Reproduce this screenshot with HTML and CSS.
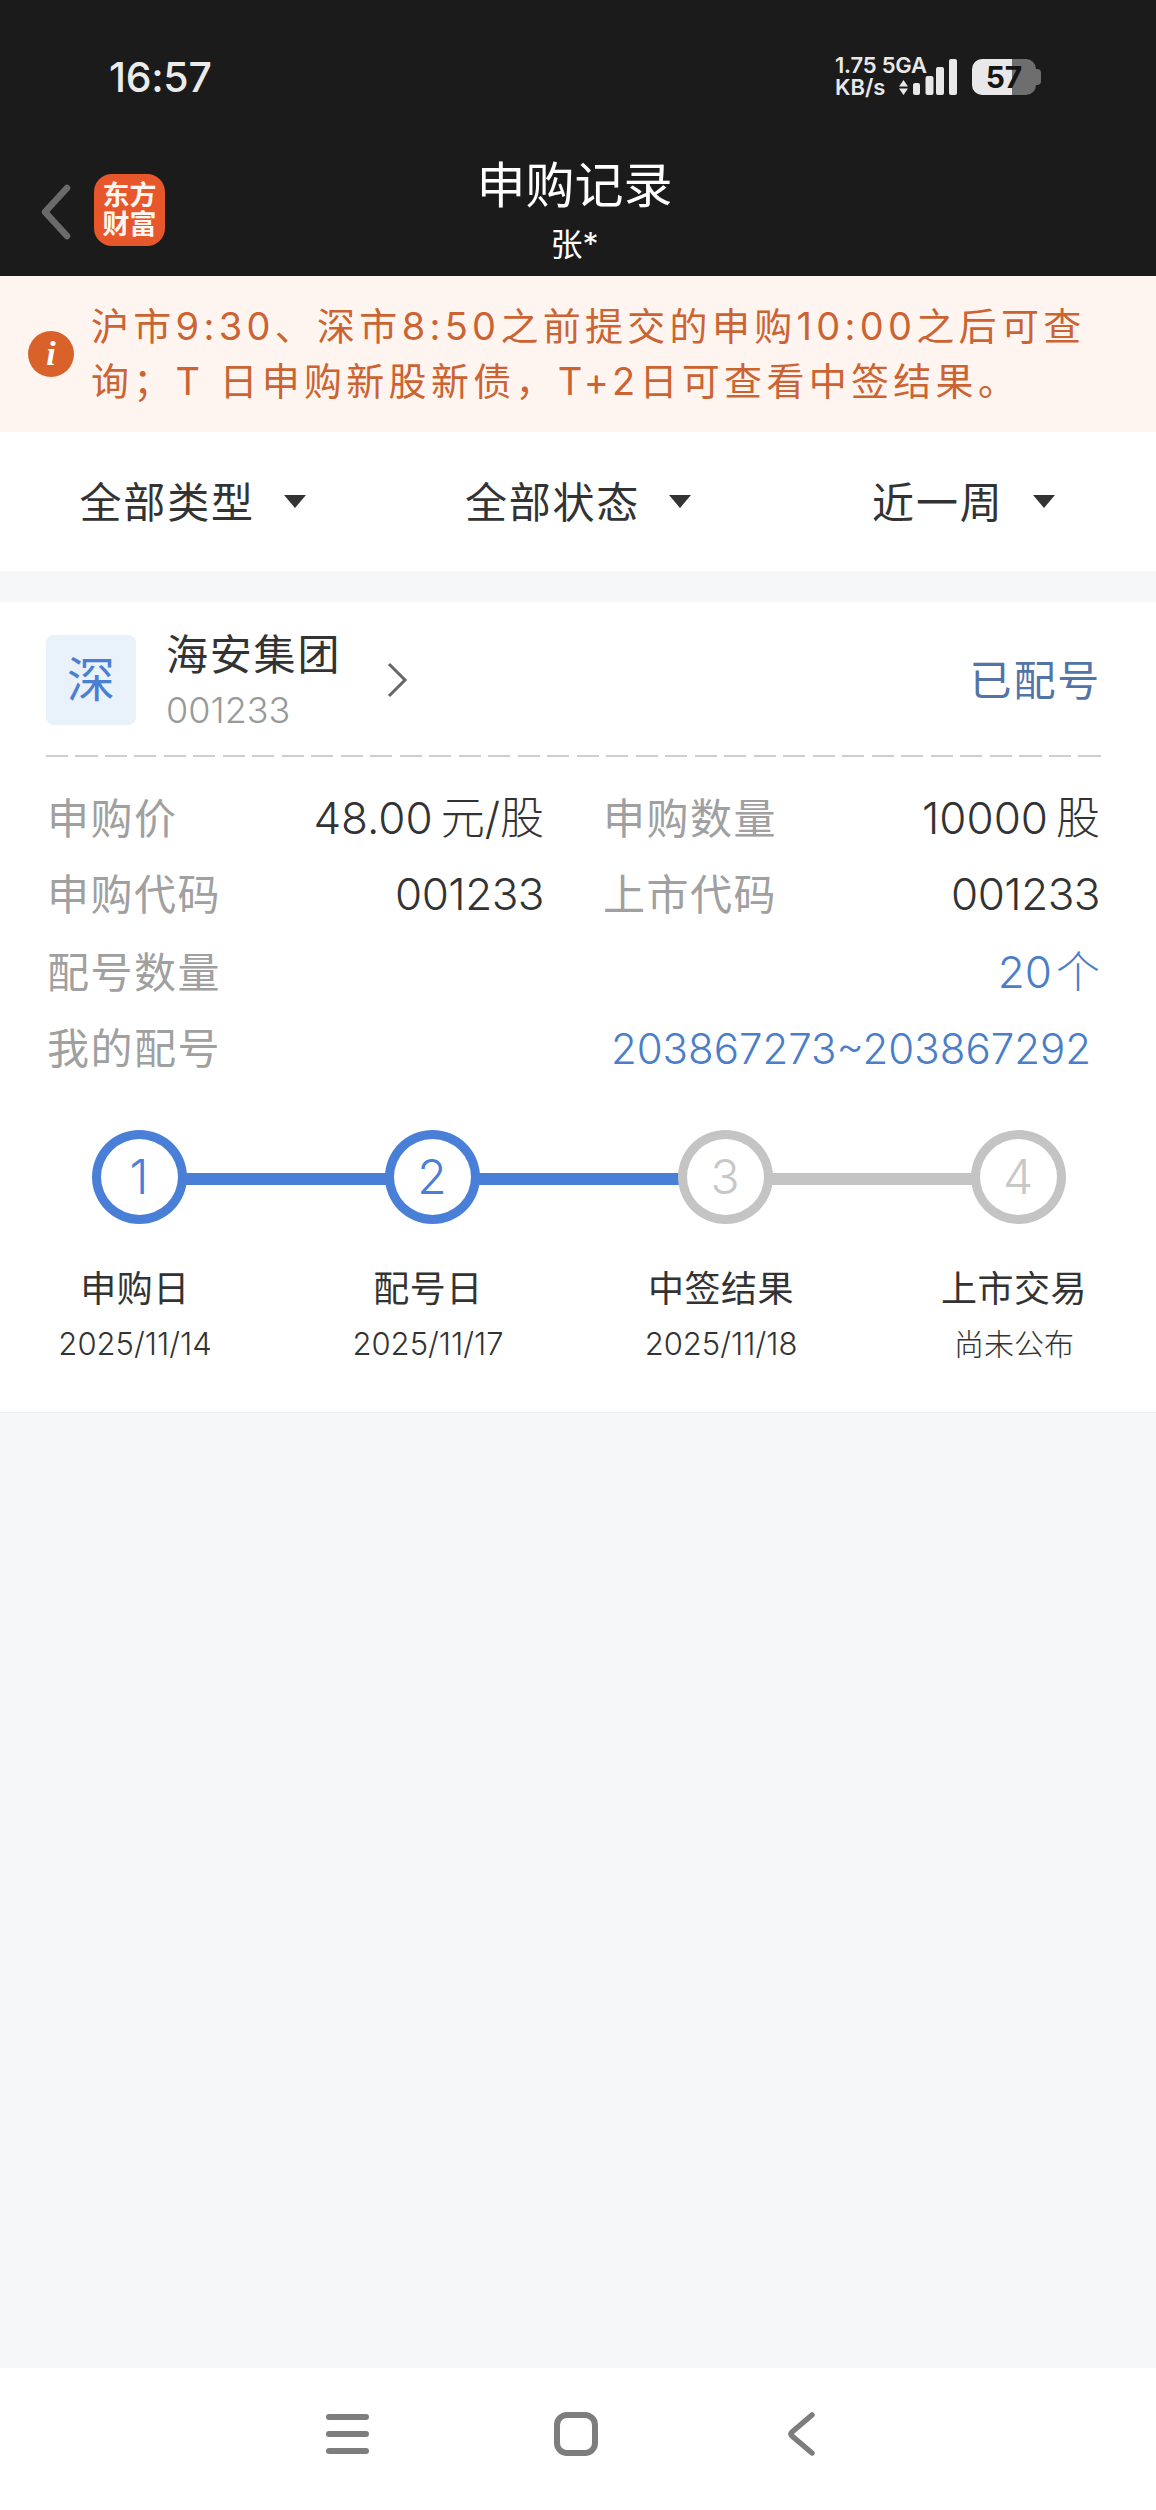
FILE: index.html
```html
<!DOCTYPE html>
<html lang="zh">
<head>
<meta charset="utf-8">
<title>申购记录</title>
<link rel="stylesheet" href="styles.css">
</head>
<body>
<div class="screen">
  <header class="header">
    <div class="status">
      <span class="time">16:57</span>
      <div class="status-right">
        <div class="net">
          <div class="net-top">1.75 5GA</div>
          <div class="net-bottom">
            <span class="net-unit">KB/s</span>
            <svg class="small-bars" width="35" height="21" viewBox="0 0 35 21"><path d="M0 12.500 4.500 6 9 12.500zM0 14.500h9L4.500 21z" fill="#e8e8e8"/><rect x="14" y="9" width="7" height="12" rx="2" fill="#e8e8e8"/><rect x="26.500" y="2" width="8" height="19" rx="2" fill="#e8e8e8"/></svg>
          </div>
        </div>
        <svg class="tall-bars" width="21" height="36" viewBox="0 0 21 36"><rect x="0" y="8" width="8" height="28" rx="2" fill="#e8e8e8"/><rect x="13" y="0" width="8" height="36" rx="2" fill="#e8e8e8"/></svg>
        <div class="battery">57</div>
      </div>
    </div>
    <div class="titlebar">
      <div class="title-left">
        <svg class="back" width="32" height="56" viewBox="0 0 32 56"><path d="M27 4 5 28l22 24" fill="none" stroke="#6a6a6a" stroke-width="6.500" stroke-linecap="round" stroke-linejoin="round"/></svg>
        <div class="logo">东方<br>财富</div>
      </div>
      <div class="title-center">
        <div class="title">申购记录</div>
        <div class="subtitle">张*</div>
      </div>
      <div></div>
    </div>
  </header>

  <section class="notice">
    <span class="notice-icon">i</span>
    <p class="notice-text">沪市9:30、深市8:50之前提交的申购10:00之后可查询&#xFF1B;T 日申购新股新债&#xFF0C;T+2日可查看中签结果。</p>
  </section>

  <nav class="filters">
    <div class="filter"><span>全部类型</span><i class="caret"></i></div>
    <div class="filter"><span>全部状态</span><i class="caret"></i></div>
    <div class="filter"><span>近一周</span><i class="caret"></i></div>
  </nav>

  <article class="card">
    <div class="card-head">
      <div class="badge">深</div>
      <div class="stock">
        <div class="stock-name">海安集团</div>
        <div class="stock-code">001233</div>
      </div>
      <svg class="chev" width="22" height="36" viewBox="0 0 22 36"><path d="M3 2l16 16L3 34" fill="none" stroke="#666" stroke-width="3"/></svg>
      <div class="state">已配号</div>
    </div>
    <div class="dash"></div>
    <div class="rows">
      <div class="row">
        <div class="pair"><span class="label">申购价</span><span class="value">48.00&#x2009;元/股</span></div>
        <div class="pair"><span class="label">申购数量</span><span class="value">10000&#x2009;股</span></div>
      </div>
      <div class="row">
        <div class="pair"><span class="label">申购代码</span><span class="value code">001233</span></div>
        <div class="pair"><span class="label">上市代码</span><span class="value code">001233</span></div>
      </div>
      <div class="row">
        <div class="pair"><span class="label">配号数量</span><span class="value link">20&#x200A;个</span></div>
      </div>
      <div class="row">
        <div class="pair"><span class="label">我的配号</span><span class="value link inset">203867273~203867292</span></div>
      </div>
    </div>
    <div class="steps">
      <div class="step on">
        <div class="circle">1</div><i class="line"></i>
        <div class="step-name">申购日</div><div class="step-date">2025/11/14</div>
      </div>
      <div class="step on">
        <div class="circle">2</div><i class="line"></i>
        <div class="step-name">配号日</div><div class="step-date">2025/11/17</div>
      </div>
      <div class="step">
        <div class="circle">3</div><i class="line"></i>
        <div class="step-name">中签结果</div><div class="step-date">2025/11/18</div>
      </div>
      <div class="step">
        <div class="circle">4</div>
        <div class="step-name">上市交易</div><div class="step-date cjk">尚未公布</div>
      </div>
    </div>
  </article>

  <div class="spacer"></div>

  <footer class="sysnav">
    <svg width="44" height="44" viewBox="0 0 44 44"><path d="M3 5h37M3 22h37M3 39h37" stroke="#7d7d7d" stroke-width="6" stroke-linecap="round"/></svg>
    <svg width="44" height="44" viewBox="0 0 44 44"><rect x="3" y="3" width="38" height="38" rx="10" fill="none" stroke="#7d7d7d" stroke-width="6"/></svg>
    <svg width="44" height="44" viewBox="0 0 44 44"><path d="M30 3 10 20c-1.500 1.300-1.500 2.700 0 4l20 17" fill="none" stroke="#7d7d7d" stroke-width="5.500" stroke-linecap="round" stroke-linejoin="round"/></svg>
  </footer>
</div>
</body>
</html>
```
FILE: styles.css
```css
* { box-sizing: border-box; }
html, body { margin: 0; padding: 0; }
body {
  font-family: Inter, "Noto Sans CJK SC", sans-serif;
  background: #f6f7f9;
  color: #333;
}
.screen {
  width: 1156px;
  height: 2510px;
  display: flex;
  flex-direction: column;
  overflow: hidden;
}

/* header */
.header { background: #1b1b1b; height: 276px; color: #fff; }
.status {
  height: 154px;
  display: flex;
  align-items: center;
  justify-content: space-between;
  padding: 0 120px 0 109px;
}
.time { font-size: 41px; font-weight: 500; color: #ebebeb; letter-spacing: -.3px; }
.status-right { display: flex; align-items: flex-end; height: 36px; color: #e8e8e8; }
.net { width: 96px; font-weight: 600; }
.net-top { font-size: 22px; line-height: 22px; white-space: nowrap; letter-spacing: -.2px; }
.net-bottom { display: flex; align-items: flex-end; height: 19px; }
.net-unit { font-size: 22px; line-height: 15px; }
.small-bars { margin-left: 14px; flex: none; }
.tall-bars { margin-left: 5px; }
.battery {
  position: relative;
  width: 64px;
  height: 36px;
  margin-left: 15px;
  border-radius: 10px;
  background: linear-gradient(90deg, #e8e8e8 0 40px, #6e6e6e 40px 100%);
  color: #151515;
  font-size: 30px;
  line-height: 36px;
  font-weight: 700;
  text-align: center;
}
.battery::after {
  content: "";
  position: absolute;
  right: -5px;
  top: 10px;
  width: 5px;
  height: 16px;
  background: #6e6e6e;
  border-radius: 0 4px 4px 0;
}
.titlebar {
  height: 122px;
  display: grid;
  grid-template-columns: 1fr auto 1fr;
}
.title-left { display: flex; align-items: flex-start; padding: 20px 0 0 40px; }
.back { margin-top: 10px; }
.logo {
  width: 71px;
  height: 72px;
  margin-left: 22px;
  border-radius: 18px;
  background: #e8572b;
  color: #fff6ef;
  font-size: 27px;
  font-weight: 700;
  line-height: 29px;
  text-align: center;
  padding-top: 7px;
}
.title-center { text-align: center; padding-top: 2px; }
.title { font-size: 49px; line-height: 60px; margin-left: -7px; }
.subtitle { font-size: 32px; line-height: 40px; margin-top: 9px; margin-left: -7px; }

/* notice */
.notice {
  height: 156px;
  background: #fef4f0;
  display: flex;
  align-items: center;
  padding: 0 40px 0 28px;
}
.notice-icon {
  flex: none;
  width: 46px;
  height: 46px;
  border-radius: 50%;
  background: #d9622b;
  color: #fff;
  font: italic 700 34px/46px "Liberation Serif", serif;
  text-align: center;
}
.notice-text {
  margin: 0 0 0 17px;
  color: #cb6432;
  font-size: 38px;
  line-height: 55px;
  letter-spacing: 4.300px;
}

/* filters */
.filters { height: 139px; background: #fff; display: flex; }
.filter {
  flex: 1;
  display: flex;
  align-items: center;
  justify-content: center;
  gap: 29px;
  font-size: 42px;
  letter-spacing: 1.800px;
}
.filter span { padding-bottom: 5px; }
.caret {
  width: 0;
  height: 0;
  border-left: 11px solid transparent;
  border-right: 11px solid transparent;
  border-top: 13px solid #333;
}

/* card */
.card { margin-top: 31px; height: 811px; padding-top: 33px; background: #fff; border-bottom: 1px solid #eff0f2; }
.card-head {
  display: flex;
  align-items: center;
  height: 90px;
  padding: 0 55px 0 46px;
}
.badge {
  width: 90px;
  height: 90px;
  border-radius: 8px;
  background: #e9f1fb;
  color: #4a7fd2;
  font-size: 48px;
  line-height: 90px;
  text-align: center;
}
.stock { margin-left: 30px; }
.stock-name { font-size: 42px; line-height: 50px; letter-spacing: 1.800px; }
.stock-code { font-size: 36px; line-height: 40px; margin-top: 10px; color: #999; font-weight: 300; }
.chev { margin-left: 45px; }
.state { margin-left: auto; padding-bottom: 5px; font-size: 42px; color: #5274a6; letter-spacing: 1.800px; }
.dash {
  height: 2px;
  margin: 30px 54px 0 46px;
  background: repeating-linear-gradient(90deg, #cfcfcf 0 22px, transparent 22px 29.500px);
}
.rows { margin-top: 19px; padding: 0 56px 0 47px; }
.row { display: flex; gap: 59px; height: 77px; align-items: center; }
.pair { flex: 1; display: flex; justify-content: space-between; align-items: baseline; }
.label { font-size: 42px; color: #a0a0a0; letter-spacing: 1.500px; }
.value { font-size: 44px; color: #333; font-weight: 300; }
.code { letter-spacing: -.5px; }
.link { color: #4a7ec8; }
.inset { margin-right: 9px; font-size: 42px; }

/* steps */
.steps {
  display: grid;
  grid-template-columns: repeat(4, 200px);
  column-gap: 93px;
  margin-top: 46px;
  padding-left: 35px;
}
.step { position: relative; display: flex; flex-direction: column; align-items: center; }
.circle {
  position: relative;
  z-index: 1;
  width: 95px;
  height: 94px;
  margin-left: 8px;
  border: 9px solid #c4c4c4;
  border-radius: 50%;
  background: #fff;
  color: #c8c8c8;
  font-size: 48px;
  line-height: 76px;
  font-weight: 300;
  text-align: center;
}
.on .circle { border-color: #4a7fd8; color: #4a7fd8; }
.line {
  position: absolute;
  left: 146px;
  width: 205px;
  top: 43px;
  height: 12px;
  background: #c4c4c4;
}
.on .line { background: #4a7fd8; }
.step-name { margin-top: 43px; font-size: 36px; line-height: 44px; white-space: nowrap; letter-spacing: .5px; }
.step-date { margin-top: 13px; font-size: 31px; line-height: 40px; font-weight: 300; white-space: nowrap; }
.cjk { font-size: 30px; }

.spacer { flex: 1; }

/* system nav */
.sysnav {
  height: 142px;
  background: #fff;
  display: flex;
  justify-content: center;
  gap: 184px;
  padding: 44px 5px 0 0;
}
```
